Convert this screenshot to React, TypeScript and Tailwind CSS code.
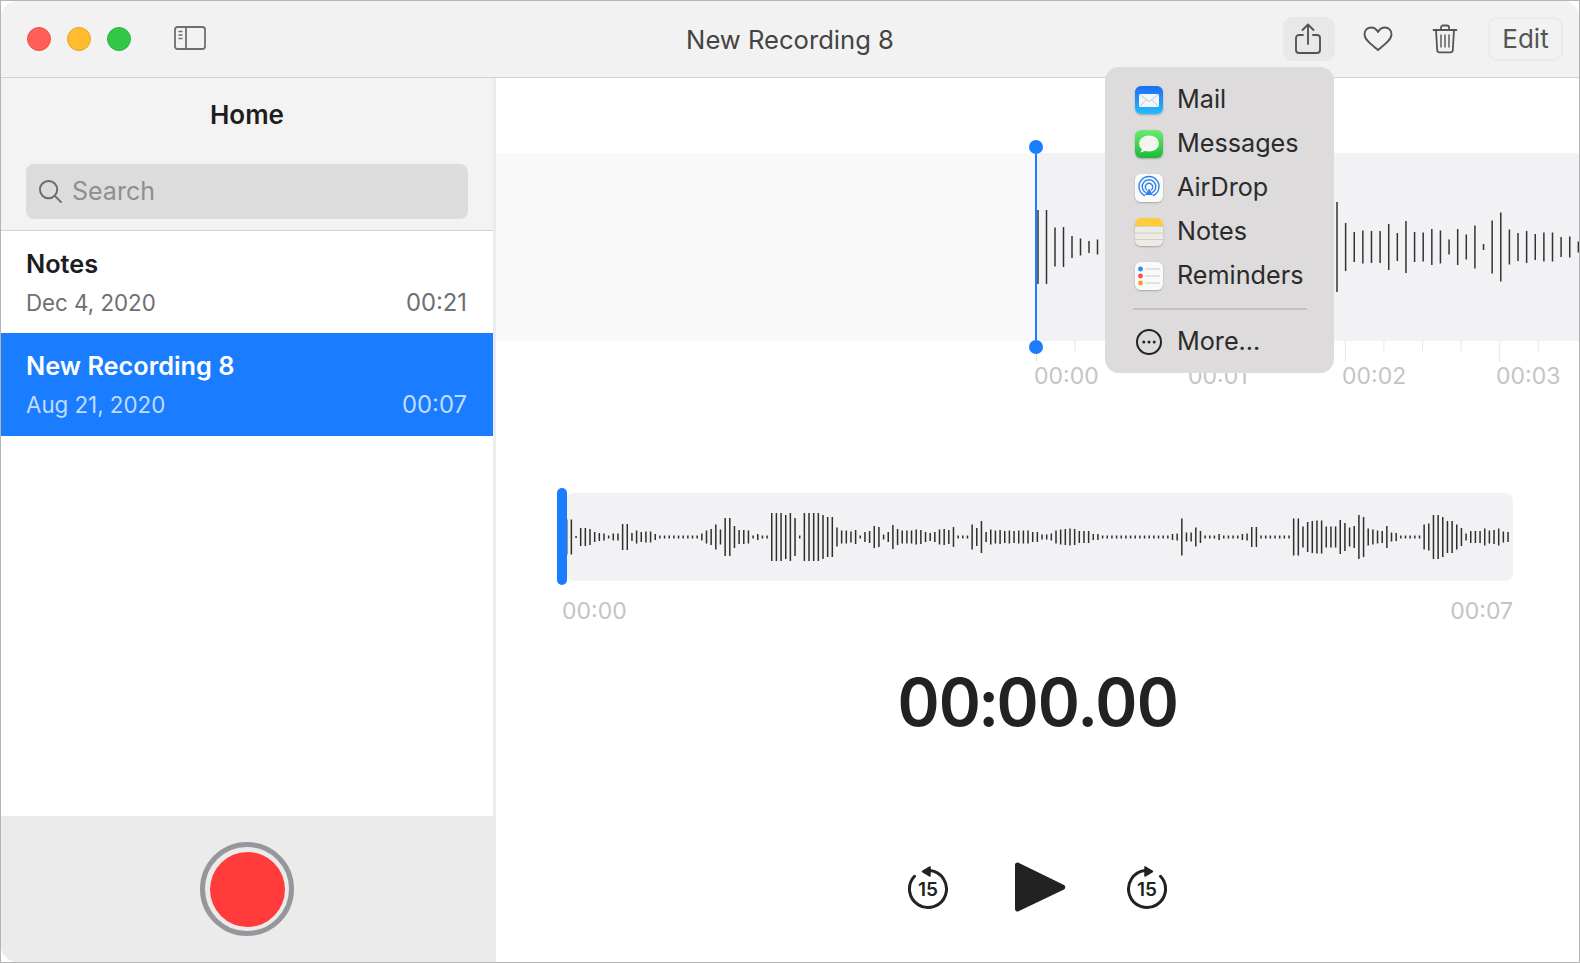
import { ReactNode } from "react";

// bar heights read off the reference, left to right
const clipBars = [
  35, 35, 2, 18, 18, 16, 10, 8, 7, 3, 7, 7, 26, 26, 8, 13, 10, 11, 11, 6, 3, 3, 3, 3, 3, 3, 3, 3, 3, 7, 13, 16, 25, 15, 38, 38, 22,
  14, 14, 13, 3, 6, 3, 3, 48, 48, 48, 44, 48, 38, 3, 48, 48, 48, 48, 44, 40, 40, 19, 13, 13, 11, 14, 3, 10, 12, 22, 20, 5, 10, 24, 16,
  13, 13, 13, 15, 14, 10, 8, 10, 15, 16, 14, 20, 3, 3, 3, 25, 18, 32, 10, 15, 13, 14, 12, 13, 12, 13, 13, 13, 10, 10,
  5, 5, 7, 13, 15, 16, 17, 16, 12, 12, 12, 6, 6, 3, 3, 3, 3, 3, 3, 3, 3, 3, 3, 3, 3, 3, 3, 3, 6, 7, 37, 9, 9, 19, 12, 3, 3, 3, 6, 3,
  3, 3, 3, 6, 7, 20, 20, 3, 3, 3, 3, 3, 3, 3, 37, 37, 21, 30, 32, 33, 33, 21, 21, 21, 34, 28, 19, 22, 44, 40, 17, 15, 13, 12, 22,
  9, 8, 3, 3, 3, 3, 3, 25, 27, 44, 44, 40, 32, 32, 25, 18, 7, 12, 12, 12, 17, 13, 14, 17, 11, 10,
];

const zoomLeft = [74, 74, 39, 40, 22, 17, 12, 15];
const zoomRight = [90, 48, 30, 33, 32, 32, 46, 28, 52, 30, 29, 36, 33, 15, 36, 25, 43, 6, 53, 69, 35, 28, 32, 26, 29, 29, 20, 21, 11];

function MailIcon() {
  return (
    <svg width="28" height="28" viewBox="0 0 28 28">
      <defs>
        <linearGradient id="mailBg" x1="0" y1="0" x2="0" y2="1">
          <stop offset="0" stopColor="#1c6cf4" />
          <stop offset="1" stopColor="#24bdfb" />
        </linearGradient>
      </defs>
      <rect width="28" height="28" rx="6" fill="url(#mailBg)" />
      <rect x="4" y="8" width="20" height="13" rx="1.5" fill="#f2f5f9" />
      <path d="M4.5 8.5 14 15.5l9.500-7M4.500 20.500l7-7M23.500 20.500l-7-7" fill="none" stroke="#b6c4d6" strokeWidth="0.9" />
    </svg>
  );
}

function MessagesIcon() {
  return (
    <svg width="28" height="28" viewBox="0 0 28 28">
      <defs>
        <linearGradient id="msgBg" x1="0" y1="0" x2="0" y2="1">
          <stop offset="0" stopColor="#6ceb72" />
          <stop offset="1" stopColor="#1db93a" />
        </linearGradient>
      </defs>
      <rect width="28" height="28" rx="6" fill="url(#msgBg)" />
      <ellipse cx="14" cy="13.500" rx="10" ry="8" fill="#f1f7ee" />
      <path d="M7 18c0 2-1 3.500-2 4.200 2.500.2 4.500-.8 6-2.200z" fill="#f1f7ee" />
    </svg>
  );
}

function AirDropIcon() {
  return (
    <svg width="28" height="28" viewBox="0 0 28 28">
      <rect width="28" height="28" rx="6" fill="#fbfbfb" />
      <g fill="none" stroke="#2d83ea" strokeWidth="1.400" strokeLinecap="round">
        <path d="M9.500 21.500a10 10 0 1 1 9 0" />
        <path d="M10.600 18.500a6.800 6.800 0 1 1 6.800 0" />
        <path d="M11.600 15.800a3.700 3.700 0 1 1 4.800 0" />
      </g>
      <path d="M14 14.500l4 6.500h-8z" fill="#2d83ea" />
    </svg>
  );
}

function NotesIcon() {
  return (
    <svg width="28" height="28" viewBox="0 0 28 28">
      <rect width="28" height="28" rx="6" fill="#ecebe6" />
      <path d="M0 8V6a6 6 0 0 1 6-6h16a6 6 0 0 1 6 6v2z" fill="#fdcb3c" />
      <path d="M0 8.500h28" stroke="#b8b6ae" strokeWidth="0.800" strokeDasharray="1.500 1" />
      <path d="M0 15h28M0 21.500h28" stroke="#c9c7c0" strokeWidth="0.800" />
    </svg>
  );
}

function RemindersIcon() {
  return (
    <svg width="28" height="28" viewBox="0 0 28 28">
      <rect width="28" height="28" rx="6" fill="#fafafa" />
      <circle cx="5.500" cy="7" r="2.400" fill="#2f8cf7" />
      <circle cx="5.500" cy="14" r="2.400" fill="#f8504a" />
      <circle cx="5.500" cy="21" r="2.400" fill="#fa9b28" />
      <path d="M10 7h15M10 14h15M10 21h15" stroke="#c6c6cc" strokeWidth="0.900" />
    </svg>
  );
}

function MoreIcon() {
  return (
    <svg width="28" height="28" viewBox="0 0 28 28">
      <circle cx="14" cy="14" r="12" fill="none" stroke="#222" strokeWidth="2" />
      <circle cx="8.800" cy="14" r="1.500" fill="#222" />
      <circle cx="14" cy="14" r="1.500" fill="#222" />
      <circle cx="19.200" cy="14" r="1.500" fill="#222" />
    </svg>
  );
}

function SkipIcon({ forward }: { forward?: boolean }) {
  return (
    <svg width="44" height="46" viewBox="0 0 44 46" className="shrink-0">
      <g transform={forward ? "translate(44 0) scale(-1 1)" : undefined}>
        <path d="M24 6.600A18.500 18.500 0 1 1 8.500 12.300" fill="none" stroke="#222" strokeWidth="3" strokeLinecap="round" />
        <path d="M16.500 7.500 24 3v9z" fill="#222" stroke="#222" strokeWidth="1.500" strokeLinejoin="round" />
      </g>
      <text x="22" y="32" textAnchor="middle" fontSize="19" fontWeight="600" fill="#222" fontFamily="Inter, sans-serif">
        15
      </text>
    </svg>
  );
}

function ShareRow({ icon, label }: { icon: ReactNode; label: string }) {
  return (
    <div className="flex h-[44px] items-center gap-[14px]">
      <div className="h-[28px] w-[28px] rounded-[6px] shadow-[0_1px_2px_rgba(0,0,0,0.25)]">{icon}</div>
      <span className="text-[25.200px] leading-none text-[#2b2b2b]">{label}</span>
    </div>
  );
}

function RecordingRow({ name, date, length, active }: { name: string; date: string; length: string; active?: boolean }) {
  return (
    <div className={`flex flex-col pt-[18px] pl-[25px] pr-[26px] ${active ? "h-[103px] bg-[#1a7dff]" : "h-[102px] bg-white"}`}>
      <div className={`text-[25.300px] leading-[30px] font-semibold ${active ? "text-white" : "text-[#1d1d1f]"}`}>{name}</div>
      <div className={`mt-[10px] flex items-center justify-between leading-[28px] ${active ? "text-[#c2dcff]" : "text-[#6e6e73]"}`}>
        <span className="text-[22.300px]">{date}</span>
        <span className="text-[23.800px]">{length}</span>
      </div>
    </div>
  );
}

export default function App() {
  return (
    <div className="h-[963px] w-[1580px] border border-[#b5b5b5] bg-white font-['Inter',sans-serif]">
      <div className="relative flex h-full flex-col overflow-hidden rounded-[16px]">
        {/* Title bar */}
        <div className="grid h-[77px] shrink-0 grid-cols-[1fr_auto_1fr] items-center border-b border-[#d2d2d2] bg-[#f2f2f2]">
          <div className="flex items-center pl-[26px]">
            <div className="h-[24px] w-[24px] rounded-full border border-[#e5524b] bg-[#ff5f57]" />
            <div className="ml-[16px] h-[24px] w-[24px] rounded-full border border-[#e3a52b] bg-[#febc2e]" />
            <div className="ml-[16px] h-[24px] w-[24px] rounded-full border border-[#2fb344] bg-[#33c748]" />
            <svg width="32" height="24" viewBox="0 0 32 24" className="ml-[43px] -mt-[3px]">
              <rect x="1" y="1" width="30" height="22" rx="2.500" fill="none" stroke="#6e6e6e" strokeWidth="1.800" />
              <path d="M12 1v22" stroke="#6e6e6e" strokeWidth="1.800" />
              <path d="M4.500 5.500h4M4.500 9h4M4.500 12.500h4" stroke="#6e6e6e" strokeWidth="1.300" />
            </svg>
          </div>
          <div className="mt-[2px] text-[25.600px] leading-none text-[#444]">New Recording 8</div>
          <div className="flex items-center justify-end pr-[16px]">
            <div className="flex h-[44px] w-[52px] items-center justify-center rounded-[9px] bg-[#e8e8e8]">
              <svg width="26" height="32" viewBox="0 0 26 32" fill="none" stroke="#555" strokeWidth="1.900" strokeLinecap="round" strokeLinejoin="round" className="-ml-[2px]">
                <path d="M8 12H4a3 3 0 0 0-3 3v12a3 3 0 0 0 3 3h18a3 3 0 0 0 3-3V15a3 3 0 0 0-3-3h-4" />
                <path d="M13 21V2M7.500 7 13 1.500 18.500 7" />
              </svg>
            </div>
            <svg width="30" height="26" viewBox="0 0 30 26" fill="none" stroke="#555" strokeWidth="1.900" strokeLinejoin="round" className="ml-[28px]">
              <path d="M15 24C9 19 1.500 14 1.500 8.200 1.500 4.500 4.300 1.500 8 1.500c3 0 5.500 1.700 7 4.500 1.500-2.800 4-4.500 7-4.500 3.700 0 6.500 3 6.500 6.700C28.500 14 21 19 15 24z" />
            </svg>
            <svg width="26" height="30" viewBox="0 0 26 30" fill="none" stroke="#555" strokeWidth="1.800" strokeLinecap="round" className="ml-[39px]">
              <path d="M1.500 6h23M9 6V3.500A2 2 0 0 1 11 1.500h4a2 2 0 0 1 2 2V6" />
              <path d="M4 6l1.200 20a2.500 2.500 0 0 0 2.500 2.400h10.600a2.500 2.500 0 0 0 2.500-2.400L22 6" />
              <path d="M9 11v12M13 11v12M17 11v12" strokeWidth="1.400" />
            </svg>
            <div className="ml-[30px] flex h-[44px] w-[75px] items-center justify-center rounded-[9px] border-2 border-[#ebebeb] text-[26px] leading-none text-[#555]">
              Edit
            </div>
          </div>
        </div>

        <div className="flex min-h-0 flex-1">
          {/* Sidebar */}
          <div className="flex w-[495px] shrink-0 flex-col border-r-[3px] border-[#ececec]">
            <div className="flex h-[153px] shrink-0 flex-col items-center border-b border-[#d2d2d2] bg-[#f3f3f3] px-[25px]">
              <div className="mt-[21px] text-[26px] leading-[32px] font-semibold text-[#1d1d1f]">Home</div>
              <div className="mt-[33px] flex h-[55px] w-full items-center rounded-[8px] bg-[#dcdcdc] pl-[12px]">
                <svg width="25" height="25" viewBox="0 0 26 26" fill="none" stroke="#6b6b6b" strokeWidth="2" strokeLinecap="round">
                  <circle cx="11" cy="11" r="9" />
                  <path d="M17.500 17.500 24 24" />
                </svg>
                <span className="ml-[9px] text-[25px] leading-none text-[#8e8e93]">Search</span>
              </div>
            </div>
            <RecordingRow name="Notes" date="Dec 4, 2020" length="00:21" />
            <RecordingRow name="New Recording 8" date="Aug 21, 2020" length="00:07" active />
            <div className="flex-1 bg-white" />
            <div className="flex h-[146px] shrink-0 items-center justify-center bg-[#ebebeb]">
              <div className="flex h-[94px] w-[94px] items-center justify-center rounded-full border-[5px] border-[#96969c]">
                <div className="h-[75px] w-[75px] rounded-full bg-[#ff3b3b]" />
              </div>
            </div>
          </div>

          {/* Main pane */}
          <div className="flex min-w-0 flex-1 flex-col">
            <div className="relative mt-[75px] shrink-0">
              <div className="flex h-[188px]">
                <div className="w-[540px] shrink-0 bg-[#f9f9fa]" />
                <div className="flex-1 bg-[#f2f2f5]">
                  <svg width="544" height="188" viewBox="0 0 544 188" stroke="#333" strokeWidth="1.500">
                    {zoomLeft.map((h, i) => (
                      <line key={i} x1={2 + i * 8.5} x2={2 + i * 8.5} y1={94 - h / 2} y2={94 + h / 2} />
                    ))}
                    {zoomRight.map((h, i) => (
                      <line key={i} x1={301 + i * 8.62} x2={301 + i * 8.62} y1={94 - h / 2} y2={94 + h / 2} />
                    ))}
                  </svg>
                </div>
              </div>
              {/* Time ruler */}
              <svg width="1084" height="21" viewBox="0 0 1084 21" stroke="#e6e6e6" strokeWidth="1" className="block">
                {Array.from({ length: 14 }, (_, i) => (
                  <line key={i} x1={540.500 + i * 38.600} x2={540.500 + i * 38.600} y1="0" y2={i % 4 === 0 ? 21 : 10} />
                ))}
              </svg>
              <div className="ml-[538px] flex text-[23px] leading-[28px] text-[#c4c4c4]">
                <span className="w-[154px]">00:00</span>
                <span className="w-[154px]">00:01</span>
                <span className="w-[154px]">00:02</span>
                <span>00:03</span>
              </div>
              {/* Playhead */}
              <div className="absolute top-[-13px] left-[533px] flex h-[214px] w-[14px] flex-col items-center justify-between">
                <div className="h-[14px] w-[14px] rounded-full bg-[#1a7dff]" />
                <div className="w-[2px] flex-1 bg-[#1a7dff]" />
                <div className="h-[14px] w-[14px] rounded-full bg-[#1a7dff]" />
              </div>
            </div>

            {/* Overview clip */}
            <div className="relative mt-[103px] ml-[70px] w-[947px] shrink-0">
              <div className="h-[88px] rounded-[8px] bg-[#f2f2f5]">
                <svg width="947" height="88" viewBox="0 0 947 88" stroke="#2e2e2e" strokeWidth="1.500">
                  {clipBars.map((h, i) => (
                    <line key={i} x1={0.700 + i * 4.66} x2={0.700 + i * 4.66} y1={44 - h / 2} y2={44 + h / 2} />
                  ))}
                </svg>
              </div>
              <div className="absolute top-[-5px] left-[-9px] h-[97px] w-[10px] rounded-full bg-[#1a7dff]" />
              <div className="mt-[16px] -ml-[4px] flex justify-between text-[23px] leading-[28px] text-[#c4c4c4]">
                <span>00:00</span>
                <span>00:07</span>
              </div>
            </div>

            <div className="mt-[37px] text-center text-[66px] leading-[80px] font-semibold tracking-[-1.400px] text-[#222] tabular-nums">00:00.00</div>

            {/* Transport */}
            <div className="mt-[117px] flex items-center justify-center">
              <SkipIcon />
              <svg width="54" height="56" viewBox="0 0 54 56" className="ml-[64px] shrink-0">
                <path d="M4 3.500 50 26a2.500 2.500 0 0 1 0 4.400L4 52.500A2.500 2.500 0 0 1 1 50V6a2.500 2.500 0 0 1 3-2.500z" fill="#222" />
              </svg>
              <div className="ml-[57px]">
                <SkipIcon forward />
              </div>
            </div>
          </div>
        </div>

        {/* Share menu */}
        <div className="absolute top-[66px] left-[1104px] flex h-[306px] w-[229px] flex-col rounded-[14px] bg-[#dddbdc] px-[30px] pt-[11px]">
          <ShareRow icon={<MailIcon />} label="Mail" />
          <ShareRow icon={<MessagesIcon />} label="Messages" />
          <ShareRow icon={<AirDropIcon />} label="AirDrop" />
          <ShareRow icon={<NotesIcon />} label="Notes" />
          <ShareRow icon={<RemindersIcon />} label="Reminders" />
          <div className="my-[10px] -ml-[2px] h-[2px] w-[174px] bg-[#c4c2c3]" />
          <div className="flex h-[44px] items-center gap-[14px]">
            <MoreIcon />
            <span className="text-[25.200px] leading-none text-[#2b2b2b]">More...</span>
          </div>
        </div>
      </div>
    </div>
  );
}
